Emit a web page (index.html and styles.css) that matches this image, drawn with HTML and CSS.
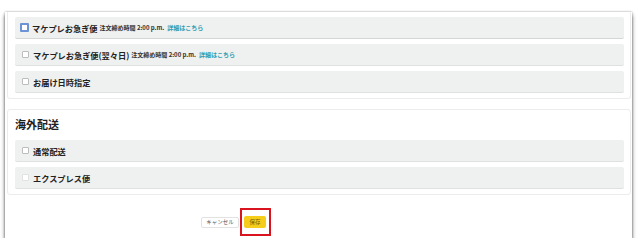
FILE: index.html
```html
<!DOCTYPE html>
<html lang="ja">
<head>
    <meta charset="UTF-8">
    <meta name="viewport" content="width=device-width, initial-scale=1.0">
    <title>配送方法の設定</title>
    <link rel="stylesheet" href="styles.css">
</head>
<body>
    <div class="window">
        <section class="card card-top">
            <label class="option">
                <span class="box focused"></span>
                <span class="name">マケプレお急ぎ便</span>
                <span class="note">注文締め時間 2:00 p.m.</span>
                <a class="more" href="#">詳細はこちら</a>
            </label>
            <label class="option">
                <span class="box"></span>
                <span class="name">マケプレお急ぎ便(翌々日)</span>
                <span class="note">注文締め時間 2:00 p.m.</span>
                <a class="more" href="#">詳細はこちら</a>
            </label>
            <label class="option">
                <span class="box"></span>
                <span class="name">お届け日時指定</span>
            </label>
        </section>

        <section class="card">
            <h3>海外配送</h3>
            <label class="option">
                <span class="box"></span>
                <span class="name">通常配送</span>
            </label>
            <label class="option">
                <span class="box faint"></span>
                <span class="name">エクスプレス便</span>
            </label>
        </section>

        <div class="actions">
            <button class="btn-cancel">キャンセル</button>
            <div class="highlight">
                <button class="btn-save">保存</button>
            </div>
        </div>
    </div>
</body>
</html>
```

FILE: styles.css
```css
body {
    margin: 0;
    background-color: #fff;
    font-family: "Noto Sans CJK JP", "Noto Sans", sans-serif;
    color: #222;
}

.window {
    margin: 12px 8px 0 5px;
    height: 226px;
    background-color: #fff;
    box-shadow: 0 3px 4px rgba(0, 0, 0, 0.6), 0 0 2px rgba(0, 0, 0, 0.35);
    overflow: hidden;
    padding: 0 1px 0 2px;
    box-sizing: border-box;
}

.card {
    border: 1px solid #ececec;
    border-radius: 3px;
    padding: 0 6px 5px 7px;
    display: flex;
    flex-direction: column;
    gap: 5px;
}

.card-top {
    border-top: none;
    border-radius: 0 0 3px 3px;
    padding-top: 5px;
    margin-bottom: 10px;
}

.card h3 {
    margin: 0;
    padding-top: 7px;
    margin-bottom: 4px;
    font-size: 11px;
    line-height: 14px;
    font-weight: bold;
    color: #1e1e1e;
}

.option {
    display: flex;
    align-items: center;
    height: 22px;
    box-sizing: border-box;
    padding-left: 7px;
    background-color: #eff0f0;
    border-bottom: 1px solid #dfe1e1;
    border-radius: 2px;
}

.option:first-child {
    border-bottom-color: #d5d7d7;
}

.box {
    width: 5px;
    height: 5px;
    border: 1px solid #bdbdbd;
    border-radius: 1px;
    background-color: #fff;
    margin: 0 4px 1px 0;
}

.box.focused {
    width: 5px;
    height: 5px;
    border: 2px solid #6b93d6;
    margin: 0 3px 0 -2px;
}

.box.faint {
    border-color: #e2e2e2;
}

.name {
    font-size: 8.2px;
    font-weight: bold;
    color: #222;
}

.note {
    font-size: 6px;
    font-weight: bold;
    margin-left: 2px;
    color: #333;
}

.more {
    font-size: 6px;
    font-weight: bold;
    margin-left: 3px;
    color: #2a9db3;
    text-decoration: none;
}

.actions {
    display: flex;
    align-items: center;
    padding: 13px 0 0 194px;
}

.btn-cancel {
    font-family: inherit;
    font-size: 5.5px;
    color: #555;
    background-color: #fff;
    border: 1px solid #e2e2e2;
    border-radius: 2px;
    height: 11px;
    width: 38px;
    padding: 0;
    margin-right: 1px;
}

.highlight {
    border: 2px solid #d8141f;
    padding: 6px 3px 6px 2px;
}

.btn-save {
    display: block;
    font-family: inherit;
    font-size: 5.5px;
    color: #7a6200;
    background-color: #f6cd1b;
    border: none;
    border-radius: 2px;
    height: 12px;
    width: 22px;
    padding: 0;
}
```
